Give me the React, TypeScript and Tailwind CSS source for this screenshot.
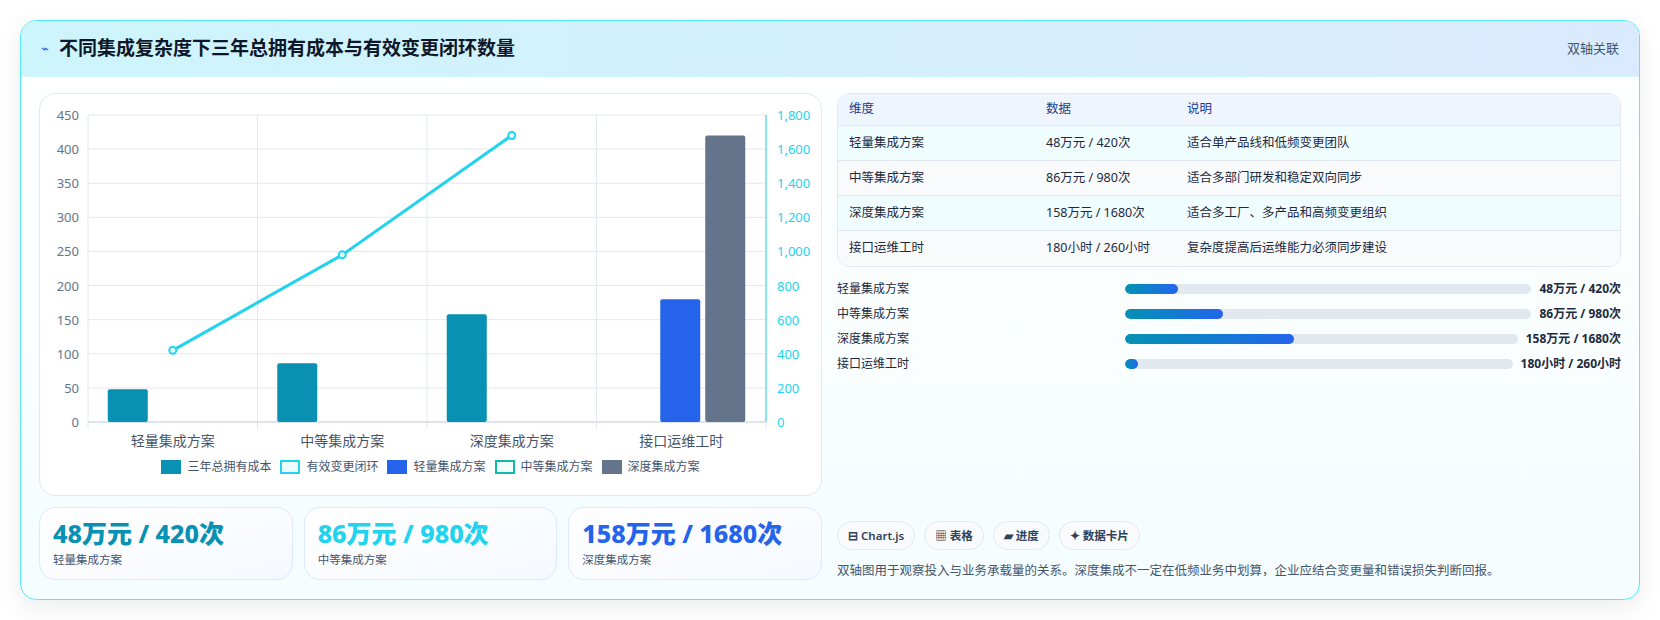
const font = { fontFamily: '"Noto Sans", "Noto Sans CJK SC", sans-serif' };

const cats = ["轻量集成方案", "中等集成方案", "深度集成方案", "接口运维工时"];
const rows = [
  ["轻量集成方案", "48万元 / 420次", "适合单产品线和低频变更团队"],
  ["中等集成方案", "86万元 / 980次", "适合多部门研发和稳定双向同步"],
  ["深度集成方案", "158万元 / 1680次", "适合多工厂、多产品和高频变更组织"],
  ["接口运维工时", "180小时 / 260小时", "复杂度提高后运维能力必须同步建设"],
];
const bars = [
  ["轻量集成方案", 13, "48万元 / 420次"],
  ["中等集成方案", 24, "86万元 / 980次"],
  ["深度集成方案", 43, "158万元 / 1680次"],
  ["接口运维工时", 3, "180小时 / 260小时"],
] as const;

function Chart() {
  const x0 = 48, x1 = 726, yTop = 21, yBot = 328;
  const cw = (x1 - x0) / 4;
  const yL = (v: number) => yBot - (v / 450) * (yBot - yTop);
  const yR = (v: number) => yBot - (v / 1800) * (yBot - yTop);
  const left = [0, 50, 100, 150, 200, 250, 300, 350, 400, 450];
  const right = [0, 200, 400, 600, 800, 1000, 1200, 1400, 1600, 1800];
  const cx = [0, 1, 2, 3].map((i) => x0 + cw * i + cw / 2);
  const teal = [48, 86, 158];
  const line = [420, 980, 1680];
  return (
    <svg width="781" height="360" className="block">
      {left.map((v) => (
        <g key={v}>
          <line x1={x0} x2={x1} y1={yL(v)} y2={yL(v)} stroke="#e2e8f0" />
          <text x={x0 - 9} y={yL(v) + 5} textAnchor="end" fontSize="13" fill="#64748b">{v}</text>
        </g>
      ))}
      {right.map((v) => (
        <text key={v} x={x1 + 11} y={yR(v) + 5} fontSize="13" fill="#22d3ee">{v.toLocaleString("en-US")}</text>
      ))}
      {[0, 1, 2, 3, 4].map((i) => (
        <line key={i} x1={x0 + i * cw} x2={x0 + i * cw} y1={yTop} y2={yBot + 7} stroke="#e2e8f0" />
      ))}
      <line x1={x0} x2={x1} y1={yBot} y2={yBot} stroke="#cbd5e1" />
      <line x1={x1} x2={x1} y1={yTop} y2={yBot} stroke="#22d3ee" />
      {teal.map((v, i) => (
        <rect key={i} x={cx[i] - 65} y={yL(v)} width="40" height={yBot - yL(v)} rx="2" fill="#0891b2" />
      ))}
      <rect x={cx[3] - 21} y={yL(180)} width="40" height={yBot - yL(180)} rx="2" fill="#2563eb" />
      <rect x={cx[3] + 24} y={yL(420)} width="40" height={yBot - yL(420)} rx="2" fill="#64748b" />
      <polyline points={line.map((v, i) => `${cx[i]},${yR(v)}`).join(" ")} fill="none" stroke="#22d3ee" strokeWidth="3" />
      {line.map((v, i) => (
        <circle key={i} cx={cx[i]} cy={yR(v)} r="3.5" fill="#e0f7fb" stroke="#22d3ee" strokeWidth="2" />
      ))}
      {cats.map((c, i) => (
        <text key={c} x={cx[i]} y={352} textAnchor="middle" fontSize="14" fill="#475569">{c}</text>
      ))}
    </svg>
  );
}

function Legend() {
  const items: [string, string][] = [
    ["bg-[#0891b2]", "三年总拥有成本"],
    ["bg-cyan-50 border-2 border-[#22d3ee]", "有效变更闭环"],
    ["bg-[#2563eb]", "轻量集成方案"],
    ["bg-teal-50 border-2 border-[#14b8a6]", "中等集成方案"],
    ["bg-[#64748b]", "深度集成方案"],
  ];
  return (
    <div className="flex justify-center gap-[9px] text-[12px] text-slate-600 mt-[4px]">
      {items.map(([c, t]) => (
        <div key={t} className="flex items-center gap-[6px]">
          <span className={`w-[20px] h-[14px] ${c}`} />
          {t}
        </div>
      ))}
    </div>
  );
}

export default function App() {
  return (
    <div className="w-[1660px] h-[620px] bg-white px-[20px] pt-[20px]" style={font}>
      <div className="h-[580px] rounded-2xl border border-cyan-300 bg-gradient-to-b from-white to-[#f5fdff] shadow-[0_8px_24px_rgba(15,23,42,0.08)] overflow-hidden flex flex-col">
        <div className="h-[56px] shrink-0 flex items-center justify-between px-[20px] bg-gradient-to-r from-[#cdf5fc] to-[#dbeafe] border-b border-cyan-100">
          <div className="flex items-center gap-[10px]">
            <span className="text-[#2563eb] text-[13px]">⌁</span>
            <h1 className="text-[19px] font-bold text-[#0f172a]">不同集成复杂度下三年总拥有成本与有效变更闭环数量</h1>
          </div>
          <span className="text-[13px] text-slate-600">双轴关联</span>
        </div>
        <div className="flex gap-[15px] px-[18px] pt-[16px] pb-[18px] flex-1">
          <div className="w-[783px] flex flex-col gap-[11px]">
            <div className="h-[403px] rounded-2xl border border-slate-200 bg-white">
              <Chart />
              <Legend />
            </div>
            <div className="flex gap-[11px]">
              {[
                ["48万元 / 420次", "text-[#0891b2]", "轻量集成方案"],
                ["86万元 / 980次", "text-[#22d3ee]", "中等集成方案"],
                ["158万元 / 1680次", "text-[#2563eb]", "深度集成方案"],
              ].map(([v, c, l]) => (
                <div key={l} className="w-[254px] h-[73px] rounded-2xl border border-blue-100 bg-gradient-to-br from-white to-[#f5f9ff] px-[13px] pt-[9px]">
                  <div className={`text-[25px] font-extrabold leading-[32px] ${c}`}>{v}</div>
                  <div className="text-[11.5px] text-slate-600 mt-[2px]">{l}</div>
                </div>
              ))}
            </div>
          </div>
          <div className="flex-1 flex flex-col">
            <div className="rounded-xl border border-slate-200 overflow-hidden bg-white text-[12.5px]">
              <div className="grid grid-cols-[197px_141px_1fr] h-[32px] items-center px-[11px] bg-[#eef5ff] text-[#1e3a8a] border-b border-slate-200">
                <span>维度</span><span>数据</span><span>说明</span>
              </div>
              {rows.map((r, i) => (
                <div key={r[0]} className={`grid grid-cols-[197px_141px_1fr] h-[35px] items-center px-[11px] text-slate-800 ${i < 3 ? "border-b border-slate-200" : ""} ${i % 2 === 0 ? "bg-[#f0fdff]" : "bg-[#f8fafc]"}`}>
                  <span>{r[0]}</span><span>{r[1]}</span><span>{r[2]}</span>
                </div>
              ))}
            </div>
            <div className="flex flex-col gap-[8px] mt-[13px]">
              {bars.map(([l, p, v]) => (
                <div key={l} className="flex items-center gap-[8px] h-[17px] text-[12px] text-slate-800">
                  <span className="w-[280px] shrink-0">{l}</span>
                  <div className="flex-1 h-[10px] rounded-full bg-[#e2e8f0] overflow-hidden">
                    <div className="h-full rounded-full bg-gradient-to-r from-[#0891b2] to-[#2563eb] min-w-[13px]" style={{ width: `${p}%` }} />
                  </div>
                  <span className="font-bold text-slate-800 whitespace-nowrap">{v}</span>
                </div>
              ))}
            </div>
            <div className="mt-auto flex gap-[9px] text-[11.5px] text-slate-700 font-semibold">
              {["⊟ Chart.js", "▦ 表格", "▰ 进度", "✦ 数据卡片"].map((t) => (
                <span key={t} className="h-[29px] px-[10px] rounded-full border border-slate-200 bg-[#f8fafc] flex items-center">{t}</span>
              ))}
            </div>
            <p className="mt-[12px] text-[12.5px] text-slate-600">双轴图用于观察投入与业务承载量的关系。深度集成不一定在低频业务中划算，企业应结合变更量和错误损失判断回报。</p>
          </div>
        </div>
      </div>
    </div>
  );
}
